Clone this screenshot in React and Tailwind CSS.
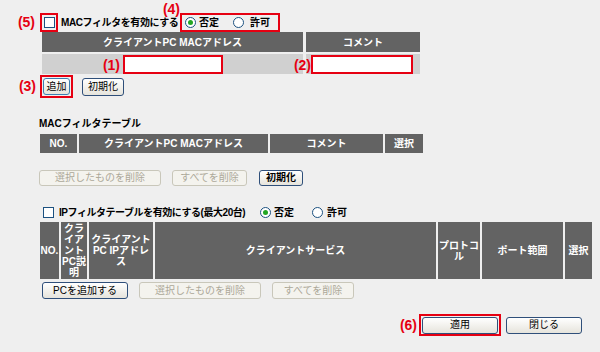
import React from "react";

const RED = "border-[#e60012]";

function Note({ children, className = "" }) {
  return (
    <span className={`text-[#e60012] text-[14px] font-bold leading-none ${className}`}>
      {children}
    </span>
  );
}

function Check() {
  return <span className="block shrink-0 w-[11px] h-[11px] border border-[#1c5180] bg-white" />;
}

function Radio({ on }) {
  return (
    <span className="flex shrink-0 items-center justify-center w-[11px] h-[11px] rounded-full border border-[#1c5180] bg-white">
      {on && <span className="block w-[5px] h-[5px] rounded-full bg-[#22a622]" />}
    </span>
  );
}

function Btn({ children, className = "", disabled }) {
  return (
    <div
      className={`flex items-center justify-center rounded-[3px] border text-[10px] leading-none ${
        disabled
          ? "border-[#c9c7ba] bg-[#f4f3ee] text-[#aca899]"
          : "border-[#2f4f7a] bg-gradient-to-b from-white to-[#e6e4dc] text-black"
      } ${className}`}
    >
      {children}
    </div>
  );
}

function Th({ children, className = "" }) {
  return (
    <div className={`flex items-center justify-center bg-[#636363] text-white font-bold text-[10px] leading-[11px] text-center ${className}`}>
      {children}
    </div>
  );
}

export default function App() {
  return (
    <div className="relative w-[600px] h-[352px] overflow-hidden bg-[#efefef] text-black text-[10px] font-[family-name:'Liberation_Sans','Noto_Sans_CJK_JP',sans-serif]">

      {/* MAC FILTER ENABLE */}
      <div className="flex items-center mt-[13px] h-[19px]">
        <div className="w-[40px] pr-[5px] text-right"><Note>(5)</Note></div>
        <div className={`flex items-center justify-center w-[18px] h-[19px] border-2 ${RED}`}>
          <Check />
        </div>
        <span className="ml-[3px] w-[117px] shrink-0 font-bold whitespace-nowrap tracking-[-0.4px]">MACフィルタを有効にする</span>
        <div className={`relative ml-[2px] flex items-center w-[100px] h-[19px] border-2 ${RED} pl-[3px] font-bold`}>
          <Note className="absolute right-full mr-[2px] -top-[13px]">(4)</Note>
          <Radio on />
          <span className="ml-[3px]">否定</span>
          <span className="ml-[14px]"><Radio /></span>
          <span className="ml-[6px]">許可</span>
        </div>
      </div>

      {/* MAC INPUT TABLE */}
      <div className="ml-[42px] flex gap-[3px]">
        <Th className="w-[261px] h-[20px]">クライアントPC MACアドレス</Th>
        <Th className="w-[114px] h-[20px]">コメント</Th>
      </div>
      <div className="ml-[42px] mt-[2px] flex gap-[3px]">
        <div className="w-[261px] h-[20px] bg-[#d0d0d0] pl-[81px]">
          <div className={`relative mt-[1px] w-[100px] h-[19px] border-2 ${RED} bg-white`}>
            <Note className="absolute right-full mr-[5px] top-[1px]">(1)</Note>
          </div>
        </div>
        <div className="w-[114px] h-[20px] bg-[#d0d0d0] pl-[5px]">
          <div className={`relative mt-[1px] w-[102px] h-[19px] border-2 ${RED} bg-white`}>
            <Note className="absolute right-full mr-[2px] top-[1px]">(2)</Note>
          </div>
        </div>
      </div>

      <div className="flex items-center mt-[1px] h-[23px]">
        <div className="w-[40px] pr-[4px] text-right"><Note>(3)</Note></div>
        <div className={`flex items-center justify-center w-[33px] h-[23px] border-2 ${RED}`}>
          <Btn className="w-[27px] h-[17px] border-[#3c7fb1]">追加</Btn>
        </div>
        <Btn className="ml-[9px] w-[42px] h-[18px]">初期化</Btn>
      </div>

      {/* MAC FILTER TABLE */}
      <div className="ml-[39px] mt-[20px] h-[12px] leading-[12px] font-bold">MACフィルタテーブル</div>
      <div className="ml-[40px] mt-[4px] flex gap-[2px]">
        <Th className="w-[37px] h-[19px]">NO.</Th>
        <Th className="w-[189px] h-[19px]">クライアントPC MACアドレス</Th>
        <Th className="w-[113px] h-[19px]">コメント</Th>
        <Th className="w-[38px] h-[19px]">選択</Th>
      </div>
      <div className="ml-[39px] mt-[17px] flex">
        <Btn disabled className="w-[122px] h-[16px]">選択したものを削除</Btn>
        <Btn disabled className="ml-[11px] w-[75px] h-[16px]">すべてを削除</Btn>
        <Btn className="ml-[12px] w-[44px] h-[16px] font-bold">初期化</Btn>
      </div>

      {/* IP FILTER */}
      <div className="ml-[43px] mt-[20px] h-[12px] flex items-center font-bold">
        <Check />
        <span className="ml-[5px] w-[201px] shrink-0 whitespace-nowrap tracking-[-0.45px]">IPフィルタテーブルを有効にする(最大20台)</span>
        <Radio on />
        <span className="ml-[3px]">否定</span>
        <span className="ml-[18px]"><Radio /></span>
        <span className="ml-[4px]">許可</span>
      </div>
      <div className="ml-[40px] mt-[4px] flex gap-[2px] h-[57px]">
        <Th className="w-[19px]">NO.</Th>
        <Th className="w-[26px]">クラ<br />イア<br />ント<br />PC説<br />明</Th>
        <Th className="w-[64px]">クライアント<br />PC IPアドレ<br />ス</Th>
        <Th className="w-[281px]">クライアントサービス</Th>
        <Th className="w-[42px]">プロトコ<br />ル</Th>
        <Th className="w-[81px]">ポート範囲</Th>
        <Th className="w-[27px]">選択</Th>
      </div>
      <div className="ml-[42px] mt-[3px] flex">
        <Btn className="w-[86px] h-[17px]">PCを追加する</Btn>
        <Btn disabled className="ml-[11px] w-[122px] h-[17px]">選択したものを削除</Btn>
        <Btn disabled className="ml-[11px] w-[82px] h-[17px]">すべてを削除</Btn>
      </div>

      {/* FOOTER */}
      <div className="mt-[15px] pr-[18px] flex justify-end items-center h-[22px]">
        <Note className="mr-[2px]">(6)</Note>
        <div className={`flex items-center justify-center w-[82px] h-[22px] border-2 ${RED}`}>
          <Btn className="w-[76px] h-[17px]">適用</Btn>
        </div>
        <Btn className="ml-[5px] w-[76px] h-[17px]">閉じる</Btn>
      </div>
    </div>
  );
}
